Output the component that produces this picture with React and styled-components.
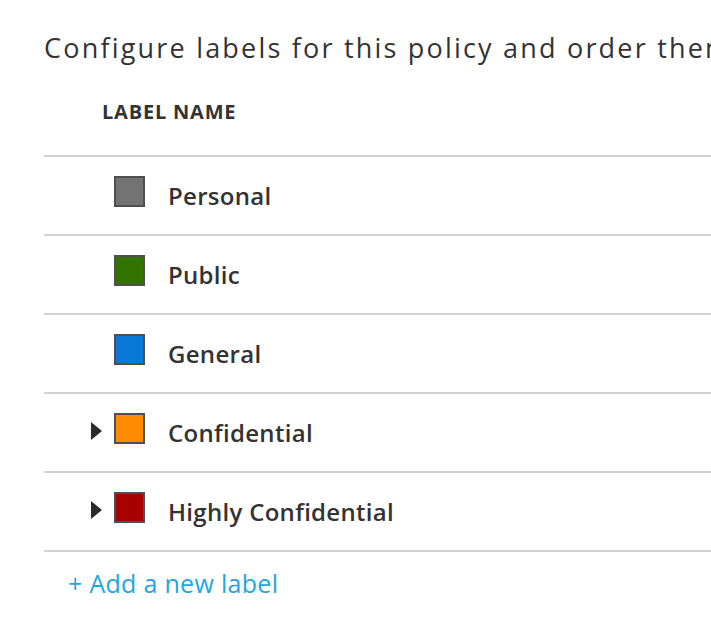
import React from 'react'
import styled, { createGlobalStyle } from 'styled-components'

const GlobalStyle = createGlobalStyle`
	html, body {
		margin: 0;
		padding: 0;
		background: #ffffff;
		overflow: hidden;
	}
	body {
		font-family: "Open Sans", "Noto Sans", "Liberation Sans", sans-serif;
		color: #333333;
	}
`

const Page = styled.div`
	width: 1200px;
	padding: 30px 0 0 44px;
	white-space: nowrap;
`

const Title = styled.div`
	font-size: 27px;
	letter-spacing: 2.2px;
	line-height: 36px;
	color: #333;
`

const Table = styled.div`
	margin-top: 30px;
`

const HeaderRow = styled.div`
	height: 59px;
	display: flex;
	align-items: flex-start;
	padding-left: 58px;
	border-bottom: 2px solid #d2d2d2;
	font-size: 20px;
	font-weight: 700;
	line-height: 32px;
	letter-spacing: 0.8px;
`

const Row = styled.div`
	height: 77px;
	display: flex;
	align-items: center;
	border-bottom: 2px solid #d2d2d2;
`

const Caret = styled.div`
	width: 23px;
	margin-left: 47px;
	display: flex;
	align-items: center;
	margin-top: -4px;
`

const Triangle = styled.span`
	width: 0;
	height: 0;
	border-top: 9px solid transparent;
	border-bottom: 9px solid transparent;
	border-left: 11px solid ${p => (p.$visible ? '#2b2b2b' : 'transparent')};
`

const Swatch = styled.span`
	width: 27px;
	height: 27px;
	box-sizing: content-box;
	border: 2px solid #4f4f4f;
	background: ${p => p.$color};
	margin-top: -8px;
`

const Name = styled.span`
	margin-left: 23px;
	font-size: 24px;
	font-weight: 600;
	letter-spacing: 0.3px;
	color: #333;
`

const AddLink = styled.a`
	display: inline-block;
	margin: 14px 0 0 24px;
	font-size: 25px;
	letter-spacing: 0.3px;
	color: #1ea6e3;
	text-decoration: none;
	cursor: pointer;
`

const labels = [
	{ name: 'Personal', color: '#737373', children: false },
	{ name: 'Public', color: '#327300', children: false },
	{ name: 'General', color: '#0a78d7', children: false },
	{ name: 'Confidential', color: '#ff8c00', children: true },
	{ name: 'Highly Confidential', color: '#a80000', children: true },
]

const App = () => {
	return (
		<Page>
			<GlobalStyle />
			<Title>Configure labels for this policy and order them from least to most sensitive</Title>
			<Table>
				<HeaderRow>LABEL NAME</HeaderRow>
				{labels.map(label => (
					<Row key={label.name}>
						<Caret>
							<Triangle $visible={label.children} />
						</Caret>
						<Swatch $color={label.color} />
						<Name>{label.name}</Name>
					</Row>
				))}
			</Table>
			<AddLink>+ Add a new label</AddLink>
		</Page>
	)
}

export default App
